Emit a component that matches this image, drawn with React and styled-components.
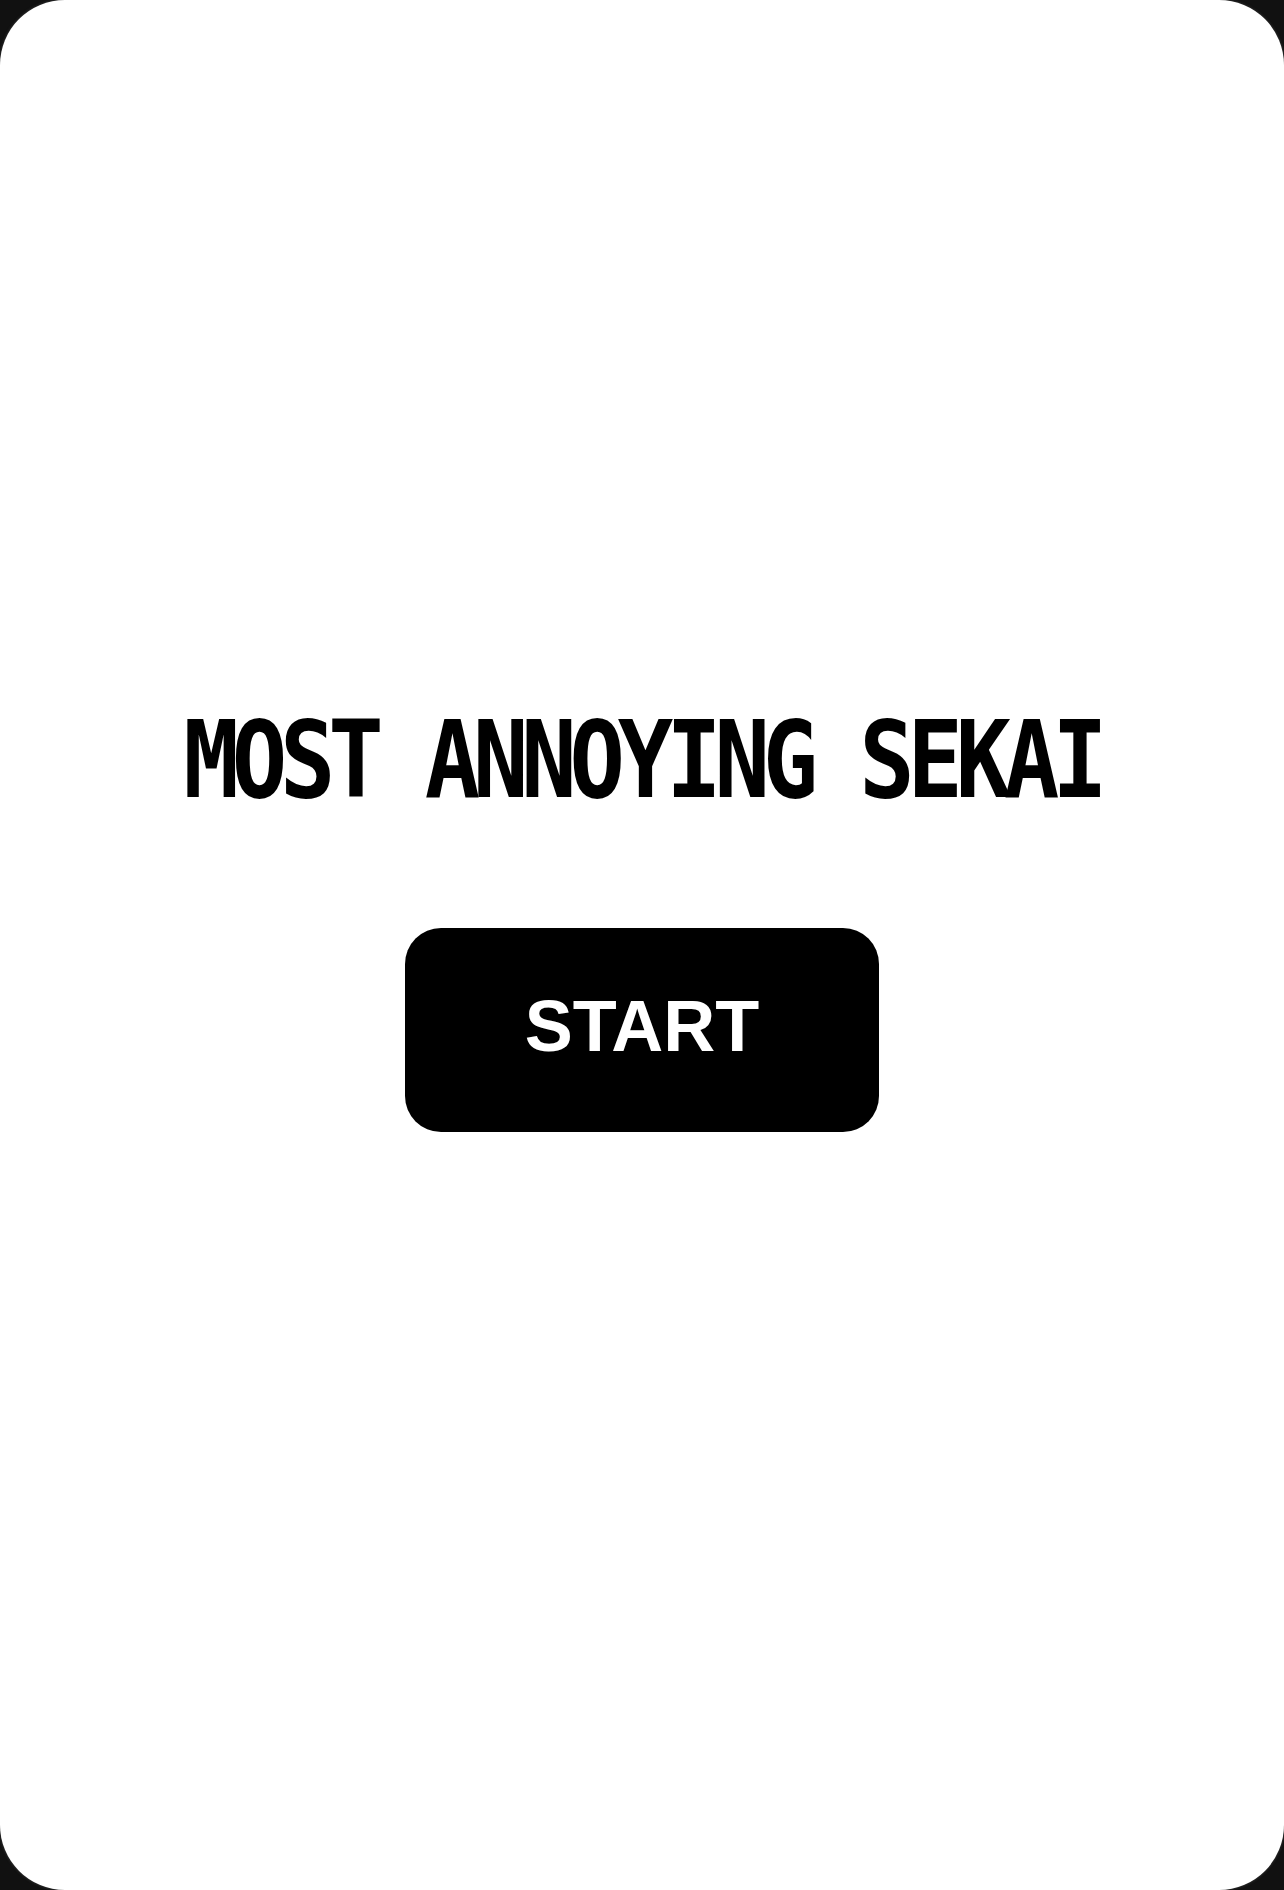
import React from "react";
import styled, { createGlobalStyle } from "styled-components";

const GlobalStyle = createGlobalStyle`
  html, body {
    margin: 0;
    padding: 0;
    background: #111111;
  }
  * {
    box-sizing: border-box;
  }
`;

const Screen = styled.div`
  width: 1284px;
  height: 1890px;
  background: #ffffff;
  border-radius: 65px;
  box-shadow: 0 0 2px 1px rgba(40, 40, 40, 0.9);
  display: flex;
  flex-direction: column;
  align-items: center;
  justify-content: center;
  padding-bottom: 52px;
`;

// condensed mono look: wide font squeezed on x
const Title = styled.h1`
  align-self: stretch;
  margin: 0 0 114px;
  font-family: "DejaVu Sans Mono", monospace;
  font-weight: bold;
  font-size: 107px;
  line-height: 107px;
  letter-spacing: -8.3px;
  text-align: center;
  color: #000000;
  white-space: nowrap;
  transform: scaleX(0.86);
`;

const StartButton = styled.button`
  width: 474px;
  height: 204px;
  padding: 0 0 8px;
  border: none;
  border-radius: 36px;
  background: #000000;
  color: #ffffff;
  font-family: "Liberation Sans", Arial, sans-serif;
  font-weight: bold;
  font-size: 72px;
  display: flex;
  align-items: center;
  justify-content: center;
  cursor: pointer;
`;

const App = () => {
  return (
    <>
      <GlobalStyle />
      <Screen>
        <Title>MOST ANNOYING SEKAI</Title>
        <StartButton>START</StartButton>
      </Screen>
    </>
  );
};

export default App;
